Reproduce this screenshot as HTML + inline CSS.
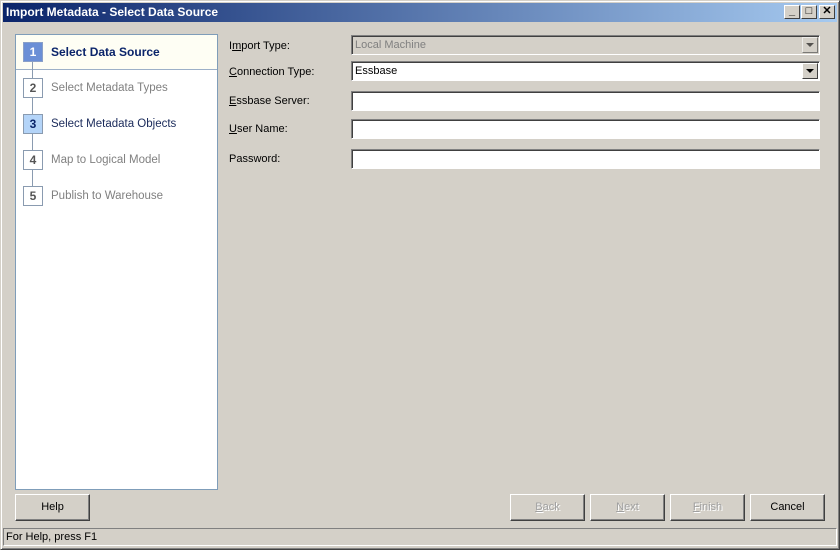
<!DOCTYPE html>
<html><head><style>
*{margin:0;padding:0;box-sizing:border-box}
body{width:840px;height:550px;background:#d4d0c8;font-family:"Liberation Sans",sans-serif;font-size:11px;position:relative;overflow:hidden}
.abs{position:absolute}
.win{left:0;top:0;width:840px;height:550px;border:1px solid;border-color:#d4d0c8 #404040 #404040 #d4d0c8;box-shadow:inset 1px 1px 0 #fff,inset -1px -1px 0 #808080}
.title{left:3px;top:3px;width:834px;height:19px;background:linear-gradient(90deg,#0a246a,#a6caf0);color:#fff;font-weight:bold;font-size:12px;line-height:19px;padding-left:3px}
.tb{top:5px;width:16px;height:14px;background:#d4d0c8;border:1px solid;border-color:#fff #404040 #404040 #fff;font-size:11px;line-height:11px;text-align:center;color:#000;font-weight:bold}
.panel{left:15px;top:34px;width:203px;height:456px;background:#fff;border:1px solid #7f9db9}
.sel{left:16px;top:35px;width:201px;height:35px;background:#fefef4;border-bottom:1px solid #9cb0c8}
.line{left:32px;top:60px;width:1px;height:130px;background:#8a9bb0}
.num{left:23px;width:20px;height:20px;border:1px solid #8a9bb0;background:#fff;color:#555;font-weight:bold;font-size:12px;text-align:center;line-height:18px}
.st{left:51px;font-size:11.5px;color:#808080}
.lbl{left:229px;font-size:11px;color:#000}
.inp{left:351px;width:469px;height:20px;background:#fff;border:1px solid;border-color:#808080 #fff #fff #808080;box-shadow:inset 1px 1px 0 #404040;padding-left:3px;line-height:18px;font-size:11px}
.dd{right:1px;top:1px;width:16px;height:16px;background:#d4d0c8;border:1px solid;border-color:#fff #404040 #404040 #fff}
.dd:after{content:"";position:absolute;left:3px;top:5px;border:4px solid transparent;border-top:4px solid #000;border-bottom:0}
.btn{top:494px;width:75px;height:27px;border:1px solid;border-color:#fff #404040 #404040 #fff;box-shadow:inset -1px -1px 0 #808080;text-align:center;line-height:25px;font-size:11px}
.dis{color:#a0a0a0;text-shadow:1px 1px 0 #fff}
</style></head><body>
<div class="abs win"></div>
<div class="abs title">Import Metadata - Select Data Source</div>
<div class="abs tb" style="left:784px">_</div>
<div class="abs tb" style="left:801px">□</div>
<div class="abs tb" style="left:819px">✕</div>
<div class="abs panel"></div>
<div class="abs sel"></div>
<div class="abs line"></div>
<div class="abs num" style="top:42px;background:#6b8fd6;color:#fff;border-color:#8aa0c8">1</div>
<div class="abs st" style="top:45px;color:#0a246a;font-weight:bold;font-size:12px">Select Data Source</div>
<div class="abs num" style="top:78px">2</div><div class="abs st" style="top:82px">Select Metadata Types</div>
<div class="abs num" style="top:114px;background:#b4d4f8;color:#0a246a">3</div><div class="abs st" style="top:118px;color:#1a2a5a">Select Metadata Objects</div>
<div class="abs num" style="top:150px">4</div><div class="abs st" style="top:154px">Map to Logical Model</div>
<div class="abs num" style="top:186px">5</div><div class="abs st" style="top:190px">Publish to Warehouse</div>

<div class="abs lbl" style="top:40px">I<u>m</u>port Type:</div>
<div class="abs lbl" style="top:66px"><u>C</u>onnection Type:</div>
<div class="abs lbl" style="top:95px"><u>E</u>ssbase Server:</div>
<div class="abs lbl" style="top:123px"><u>U</u>ser Name:</div>
<div class="abs lbl" style="top:153px">Password:</div>
<div class="abs inp" style="top:35px;background:#d4d0c8;color:#808080">Local Machine<div class="abs dd" style="opacity:.6"></div></div>
<div class="abs inp" style="top:61px">Essbase<div class="abs dd"></div></div>
<div class="abs inp" style="top:91px"></div>
<div class="abs inp" style="top:119px"></div>
<div class="abs inp" style="top:149px"></div>

<div class="abs btn" style="left:15px">Help</div>
<div class="abs btn dis" style="left:510px"><u>B</u>ack</div>
<div class="abs btn dis" style="left:590px"><u>N</u>ext</div>
<div class="abs btn dis" style="left:670px"><u>F</u>inish</div>
<div class="abs btn" style="left:750px">Cancel</div>
<div class="abs" style="left:3px;top:528px;width:834px;height:18px;border:1px solid;border-color:#808080 #fff #fff #808080;line-height:16px;padding-left:2px">For Help, press F1</div>
</body></html>
